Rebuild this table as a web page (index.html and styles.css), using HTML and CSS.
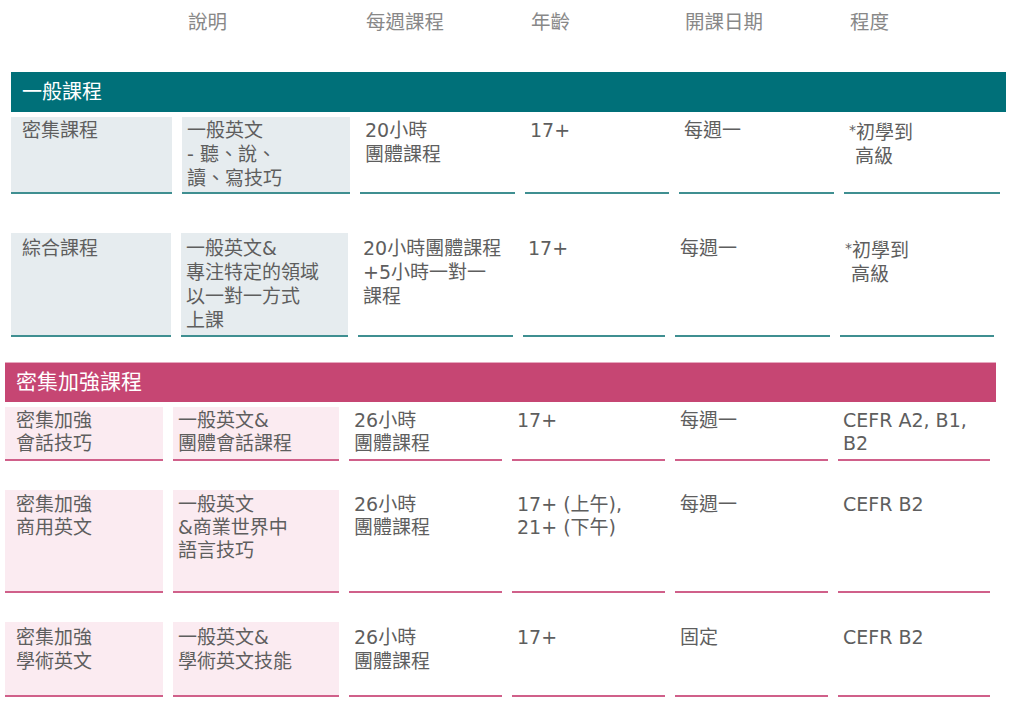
FILE: index.html
```html
<!DOCTYPE html>
<html lang="zh-Hant">
<head>
<meta charset="utf-8">
<title>課程</title>
<link rel="stylesheet" href="styles.css">
</head>
<body>
<div class="page">
  <div class="head cols-a">
    <div></div>
    <div class="h">說明</div>
    <div class="h">每週課程</div>
    <div class="h">年齡</div>
    <div class="h">開課日期</div>
    <div class="h">程度</div>
  </div>

  <div class="bar teal">一般課程</div>

  <div class="row s1 cols-a r11">
    <div class="c shade first">密集課程</div>
    <div class="c shade">一般英文<br>- 聽、說、<br>讀、寫技巧</div>
    <div class="c">20小時<br>團體課程</div>
    <div class="c">17+</div>
    <div class="c">每週一</div>
    <div class="c"><span class="ast">*</span>初學到<br>&nbsp;高級</div>
  </div>

  <div class="row s1 cols-b r12">
    <div class="c shade first">綜合課程</div>
    <div class="c shade">一般英文&amp;<br>專注特定的領域<br>以一對一方式<br>上課</div>
    <div class="c">20小時團體課程<br>+5小時一對一<br>課程</div>
    <div class="c">17+</div>
    <div class="c">每週一</div>
    <div class="c"><span class="ast">*</span>初學到<br>&nbsp;高級</div>
  </div>

  <div class="bar pink">密集加強課程</div>

  <div class="row s2 cols-c r21">
    <div class="c shade first">密集加強<br>會話技巧</div>
    <div class="c shade">一般英文&amp;<br>團體會話課程</div>
    <div class="c">26小時<br>團體課程</div>
    <div class="c">17+</div>
    <div class="c">每週一</div>
    <div class="c">CEFR A2, B1,<br>B2</div>
  </div>

  <div class="row s2 cols-c r22">
    <div class="c shade first">密集加強<br>商用英文</div>
    <div class="c shade">一般英文<br>&amp;商業世界中<br>語言技巧</div>
    <div class="c">26小時<br>團體課程</div>
    <div class="c">17+ (上午),<br>21+ (下午)</div>
    <div class="c">每週一</div>
    <div class="c">CEFR B2</div>
  </div>

  <div class="row s2 cols-c r23">
    <div class="c shade first">密集加強<br>學術英文</div>
    <div class="c shade">一般英文&amp;<br>學術英文技能</div>
    <div class="c">26小時<br>團體課程</div>
    <div class="c">17+</div>
    <div class="c">固定</div>
    <div class="c">CEFR B2</div>
  </div>
</div>
</body>
</html>
```

FILE: styles.css
```css
html, body {
  margin: 0;
  padding: 0;
  background: #ffffff;
}

.page {
  width: 1020px;
  height: 710px;
  overflow: hidden;
  font-family: "DejaVu Sans", "Noto Sans CJK TC", sans-serif;
  color: #5e5e5e;
}

.cols-a {
  display: grid;
  grid-template-columns: 161px 168px 155px 144px 155px 156px;
  column-gap: 10px;
  margin-left: 11px;
}

.cols-b {
  display: grid;
  grid-template-columns: 160px 167px 155px 142px 155px 154px;
  column-gap: 10px;
  margin-left: 11px;
}

.cols-c {
  display: grid;
  grid-template-columns: 158px 166px 153px 153px 153px 152px;
  column-gap: 10px;
  margin-left: 5px;
}

.head {
  margin-top: 11px;
  height: 24px;
}

.h {
  font-size: 19.5px;
  line-height: 24px;
  color: #888888;
  padding-left: 6px;
}

.bar {
  height: 40px;
  line-height: 40px;
  color: #ffffff;
  padding-left: 11px;
}

.teal {
  margin-top: 37px;
  margin-left: 11px;
  width: 984px;
  background: #007079;
  font-size: 20px;
}

.pink {
  margin-top: 25px;
  margin-left: 5px;
  width: 980px;
  background: #c64673;
  font-size: 21px;
  border-top: 1px solid #e7a9bf;
  height: 39px;
  line-height: 39px;
}

.row .c {
  font-size: 19px;
  box-sizing: border-box;
  padding-left: 5px;
  white-space: nowrap;
}

.row .c.first {
  padding-left: 11px;
}

.ast {
  font-size: 14px;
  vertical-align: 4px;
}

.s1 .c {
  line-height: 24px;
  border-bottom: 2px solid #3f8f91;
}

.s1 .shade {
  background: #e6ecef;
}

.s2 .c {
  line-height: 23px;
  border-bottom: 2px solid #d0608a;
}

.s2 .shade {
  background: #fbebf1;
}

.r11 {
  margin-top: 5px;
}
.r11 .c {
  height: 77px;
  padding-top: 1px;
}

.r12 {
  margin-top: 39px;
}
.r12 .c {
  height: 104px;
  padding-top: 3px;
}

.r21 {
  margin-top: 5px;
}
.r21 .c {
  height: 54px;
  padding-top: 2px;
}

.r22 {
  margin-top: 29px;
}
.r22 .c {
  height: 103px;
  padding-top: 3px;
}

.r23 {
  margin-top: 29px;
}
.r23 .c {
  height: 75px;
  padding-top: 3px;
  line-height: 24px;
}
```
